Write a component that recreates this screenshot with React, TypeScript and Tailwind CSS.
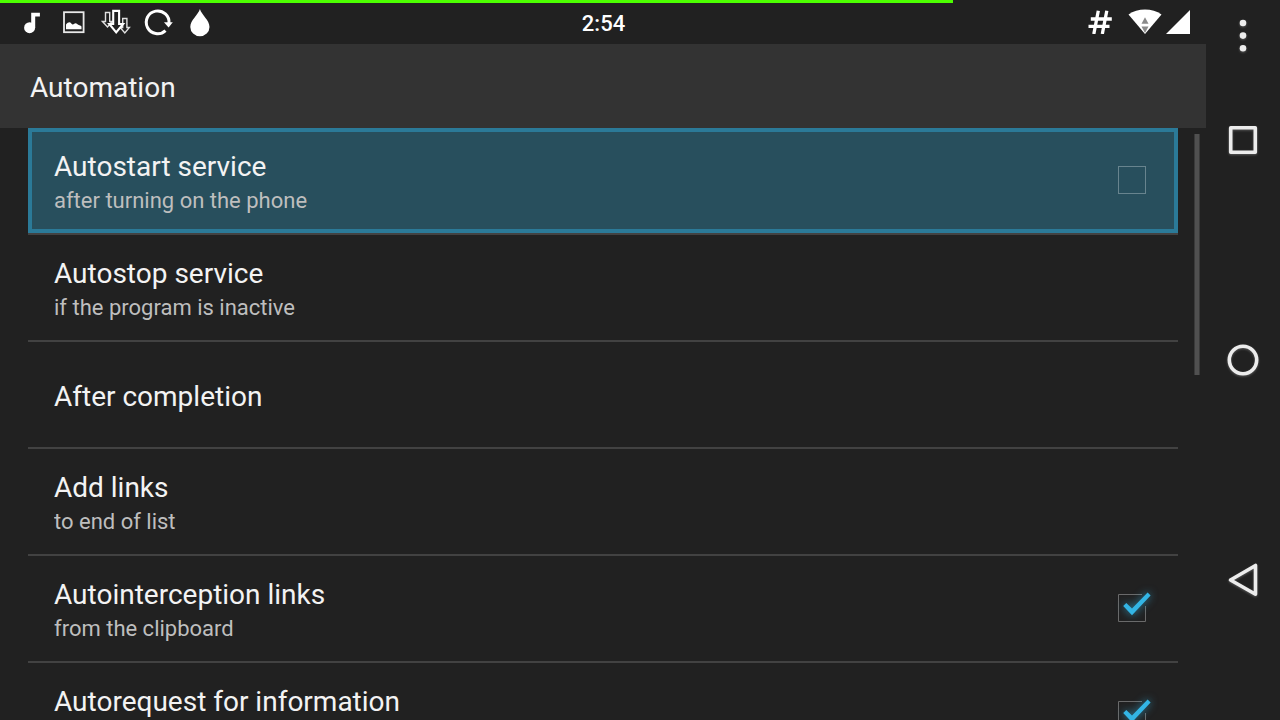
import { useState } from "react";

type Preference = {
  id: string;
  title: string;
  summary?: string;
  checkbox?: boolean;
};

const preferences: Preference[] = [
  { id: "autostart", title: "Autostart service", summary: "after turning on the phone", checkbox: true },
  { id: "autostop", title: "Autostop service", summary: "if the program is inactive" },
  { id: "after", title: "After completion" },
  { id: "add", title: "Add links", summary: "to end of list" },
  { id: "intercept", title: "Autointerception links", summary: "from the clipboard", checkbox: true },
  { id: "request", title: "Autorequest for information", summary: "\u00a0", checkbox: true },
];

function NoteIcon() {
  return (
    <svg className="size-[30px]" viewBox="0 0 30 30" fill="#fff" aria-hidden="true">
      <circle cx="12.600" cy="20.700" r="5.500" />
      <path d="M14.200 5.700h8.700v3.900h-4.700v11.500h-4z" />
    </svg>
  );
}

function PictureIcon() {
  return (
    <svg className="size-[30px]" viewBox="0 0 30 30" aria-hidden="true">
      <rect x="5" y="5.200" width="19.600" height="20" fill="none" stroke="#e8e8e8" strokeWidth="1.800" />
      <path d="M7 22.200v-4.600c1.200-1.600 2.300-2.300 3.500-2.300 1.300 0 1.900 2 3.100 2.300 1.100.2 1.500-1.300 2.900-1.300 1.400 0 2 1.300 3.200 1.600 1 .2 1.700.5 2.800 1.500v2.800z" fill="#fff" />
    </svg>
  );
}

function DownloadsIcon() {
  return (
    <svg className="size-[30px]" viewBox="0 0 30 30" fill="#212121" stroke="#fff" aria-hidden="true">
      <path d="M4.500 5.500h4.200v9h2.500L6.500 20 1.500 14.500h3z" stroke="#e0e0e0" strokeWidth="1.400" />
      <path d="M21.700 11.500h4.200v9h2.500L23.800 26l-4.600-5.500h2.500z" stroke="#e0e0e0" strokeWidth="1.400" />
      <path d="M12.200 3.900h5.900v13.100h4L15.200 25.300 8.300 17h3.900z" strokeWidth="2.100" />
    </svg>
  );
}

function SyncIcon() {
  return (
    <svg className="size-[30px]" viewBox="0 0 30 30" aria-hidden="true">
      <path d="M26 16.500A11.400 11.400 0 1 0 22.500 23.600" fill="none" stroke="#fff" strokeWidth="3" />
      <path d="M21 15.300h8.800L25.600 20.500z" fill="#fff" />
    </svg>
  );
}

function DropIcon() {
  return (
    <svg className="size-[30px]" viewBox="0 0 30 30" fill="#fff" aria-hidden="true">
      <path d="M14.900 2C16.600 8 24.500 13 24.500 20a9.600 9.200 0 0 1-19.200 0C5.300 13 13.200 8 14.900 2z" />
    </svg>
  );
}

function HashIcon() {
  return (
    <svg className="h-6 w-6" viewBox="0 0 24 24" fill="none" stroke="#fff" strokeWidth="3.300" aria-hidden="true">
      <path d="M10.300.8 5.800 24M18.800.8 14.300 24M2.800 9h21M.5 16.300h21" />
    </svg>
  );
}

function WifiIcon() {
  return (
    <svg className="h-[26px] w-[34px]" viewBox="0 0 34 26" aria-hidden="true">
      <path d="M.5 5.400C9.500-1.100 24.500-1.100 33.500 5.400L17 25z" fill="#fff" />
      <path d="M17 8.200l3.500 6.500h-7zM13.500 17.500h7L17 24z" fill="#8a8a8a" />
    </svg>
  );
}

function SignalIcon() {
  return (
    <svg className="h-6 w-6" viewBox="0 0 24 24" fill="#fff" aria-hidden="true">
      <path d="M24 0v24H0z" />
    </svg>
  );
}

function StatusBar() {
  return (
    <div className="flex h-11 shrink-0 items-center pr-4 pl-[17px] text-white">
      <div className="flex flex-1 items-center gap-3">
        <NoteIcon />
        <PictureIcon />
        <DownloadsIcon />
        <SyncIcon />
        <DropIcon />
      </div>
      <time className="pt-1 text-[22px] leading-7 font-medium">2:54</time>
      <div className="flex flex-1 items-center justify-end">
        <HashIcon />
        <span className="flex items-center gap-1 pl-4">
          <WifiIcon />
          <SignalIcon />
        </span>
      </div>
    </div>
  );
}

function CheckMark({ checked }: { checked: boolean }) {
  if (!checked) {
    return (
      <svg className="mb-0.5 size-7 overflow-visible" viewBox="0 0 28 28" aria-hidden="true">
        <rect x="0.500" y="0.500" width="27" height="27" fill="none" stroke="#fff" strokeOpacity="0.300" />
      </svg>
    );
  }
  return (
    <svg className="mb-0.5 size-7 overflow-visible" viewBox="0 0 28 28" aria-hidden="true">
      <path d="M24 .5H.5v27h27V12" fill="none" stroke="#6a6a6a" />
      <path
        className="drop-shadow-[0_0_4px_rgba(51,181,229,0.7)]"
        d="M5.200 12 8.300 8.900 14 14.500 29.600-1.500 32.600 1.500 14 21.200z"
        fill="#33b5e5"
      />
    </svg>
  );
}

function RowText({ title, summary }: { title: string; summary?: string }) {
  return (
    <span className="flex flex-1 flex-col pt-1">
      <span className="truncate text-[28px] leading-9 text-[#f3f3f3]">{title}</span>
      {summary && <span className="truncate text-[22px] leading-8 text-[#bebebe]">{summary}</span>}
    </span>
  );
}

function NavButton({ label, children }: { label: string; children: React.ReactNode }) {
  return (
    <button type="button" aria-label={label} className="flex h-[60px] w-full items-center justify-center">
      <svg
        className="size-9 overflow-visible drop-shadow-[0_1px_1px_rgba(255,255,255,0.25)]"
        viewBox="0 0 36 36"
        fill="none"
        stroke="#ececec"
        strokeWidth="3.600"
        strokeLinejoin="round"
        aria-hidden="true"
      >
        {children}
      </svg>
    </button>
  );
}

export default function App() {
  const [checked, setChecked] = useState<Record<string, boolean>>({ intercept: true, request: true });
  const [focused, setFocused] = useState("autostart");

  return (
    <div className="relative flex h-screen overflow-hidden bg-[#212121] font-['Roboto',sans-serif]">
      <div className="absolute top-0 left-0 h-[3px] w-[74.45%] bg-[#4cff00]" />

      <div className="flex min-w-0 flex-1 flex-col">
        <StatusBar />
        <header className="flex h-[84px] shrink-0 items-center bg-[#333333] px-[30px] pt-1">
          <h1 className="text-[28px] leading-9 text-[#f3f3f3]">Automation</h1>
        </header>

        <main className="relative min-h-0 flex-1 overflow-hidden px-7">
          <ul>
            {preferences.map((item) => {
              const rowClass =
                item.id === focused
                  ? "flex h-[105px] w-full items-center border-4 border-[#2b7a98] bg-[#284f5d] pr-7 pl-[22px] text-left"
                  : "flex h-[105px] w-full items-center pr-8 pl-[26px] text-left";
              return (
                <li key={item.id} className="border-b-2 border-[#424242]">
                  {item.checkbox ? (
                    <label className={rowClass} onClick={() => setFocused(item.id)}>
                      <RowText title={item.title} summary={item.summary} />
                      <input
                        type="checkbox"
                        className="sr-only"
                        checked={!!checked[item.id]}
                        onChange={(e) => setChecked({ ...checked, [item.id]: e.target.checked })}
                      />
                      <CheckMark checked={!!checked[item.id]} />
                    </label>
                  ) : (
                    <button type="button" className={rowClass} onClick={() => setFocused(item.id)}>
                      <RowText title={item.title} summary={item.summary} />
                    </button>
                  )}
                </li>
              );
            })}
          </ul>
          <div className="absolute top-1.5 right-1.5 h-[241px] w-1.5 border-x border-[#3a3a3a] bg-[#505050]" />
        </main>
      </div>

      <nav className="flex w-[74px] shrink-0 flex-col pb-[110px]">
        <button type="button" aria-label="More options" className="flex h-[72px] items-center justify-center">
          <svg className="h-9 w-2 drop-shadow-[0_1px_1px_rgba(255,255,255,0.25)]" viewBox="0 0 8 36" fill="#ececec" aria-hidden="true">
            <circle cx="4" cy="5" r="3.300" />
            <circle cx="4" cy="17.600" r="3.300" />
            <circle cx="4" cy="30.300" r="3.300" />
          </svg>
        </button>
        <div className="flex flex-1 flex-col justify-between pt-[38px]">
          <NavButton label="Recent apps">
            <rect x="5.700" y="5.700" width="24.600" height="24.600" />
          </NavButton>
          <NavButton label="Home">
            <circle cx="18" cy="18" r="13.700" />
          </NavButton>
          <NavButton label="Back">
            <path d="M5.500 18 30.500 3.500v28.800z" />
          </NavButton>
        </div>
      </nav>
    </div>
  );
}
